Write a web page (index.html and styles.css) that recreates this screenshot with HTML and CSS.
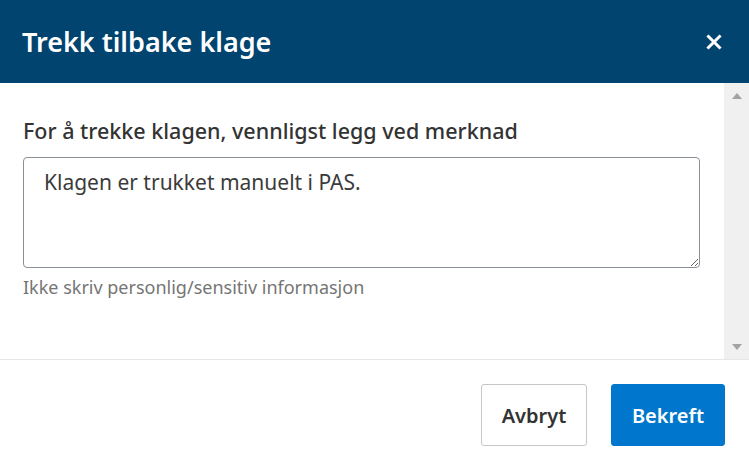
FILE: index.html
```html
<!DOCTYPE html>
<html lang="no">
<head>
<meta charset="utf-8">
<title>Trekk tilbake klage</title>
<link rel="stylesheet" href="styles.css">
</head>
<body>
<div class="modal">
  <div class="header">
    <h1 class="title">Trekk tilbake klage</h1>
    <button class="close" aria-label="Lukk">
      <svg width="16" height="16" viewBox="0 0 16 16"><path d="M2.5 2.5 L13.5 13.5 M13.5 2.5 L2.5 13.5" stroke="#fff" stroke-width="3" stroke-linecap="square"/></svg>
    </button>
  </div>
  <div class="body">
    <div class="content">
      <label class="label" for="merknad">For å trekke klagen, vennligst legg ved merknad</label>
      <textarea id="merknad" class="textarea">Klagen er trukket manuelt i PAS.</textarea>
      <div class="hint">Ikke skriv personlig/sensitiv informasjon</div>
    </div>
    <div class="scrollbar">
      <span class="arrow up"></span>
      <span class="arrow down"></span>
    </div>
  </div>
  <div class="footer">
    <button class="btn btn-secondary">Avbryt</button>
    <button class="btn btn-primary">Bekreft</button>
  </div>
</div>
</body>
</html>
```
FILE: styles.css
```css
html, body {
  margin: 0;
  padding: 0;
  background: #fff;
}
body {
  font-family: "Noto Sans", "Open Sans", sans-serif;
  color: #333;
}
.modal {
  width: 749px;
  height: 469px;
  display: flex;
  flex-direction: column;
}
.header {
  height: 83px;
  flex: none;
  background: #00446f;
  display: flex;
  align-items: center;
  justify-content: space-between;
  padding: 0 27px 0 22px;
  box-sizing: border-box;
}
.title {
  margin: 0;
  color: #fff;
  font-size: 27px;
  font-weight: 600;
  line-height: 36px;
}
.close {
  background: none;
  border: 0;
  padding: 0;
  width: 16px;
  height: 16px;
  display: flex;
  cursor: pointer;
}
.body {
  height: 276px;
  flex: none;
  display: flex;
}
.content {
  flex: 1;
  padding: 34px 24px 0 23px;
  display: flex;
  flex-direction: column;
}
.label {
  font-size: 21.5px;
  font-weight: 500;
  color: #333;
  line-height: 28px;
  margin-bottom: 12px;
}
.textarea {
  width: 677px;
  height: 111px;
  box-sizing: border-box;
  border: 1px solid #8a9098;
  border-radius: 4px;
  padding: 10px 20px;
  font-family: "Noto Sans", "Open Sans", sans-serif;
  font-size: 21px;
  line-height: 28px;
  color: #3b3b3b;
  resize: vertical;
  margin: 0;
  display: block;
}
.hint {
  margin-top: 7px;
  font-size: 18px;
  line-height: 24px;
  color: #757575;
}
.scrollbar {
  width: 25px;
  flex: none;
  background: #f0f0f0;
  display: flex;
  flex-direction: column;
  justify-content: space-between;
  align-items: center;
  padding: 10px 0 9px;
  box-sizing: border-box;
}
.arrow {
  width: 0;
  height: 0;
  border-left: 5px solid transparent;
  border-right: 5px solid transparent;
}
.arrow.up {
  border-bottom: 6px solid #a3a3a3;
}
.arrow.down {
  border-top: 6px solid #a3a3a3;
}
.footer {
  flex: 1;
  border-top: 1px solid #e6e6e6;
  display: flex;
  justify-content: flex-end;
  align-items: flex-start;
  gap: 24px;
  padding: 24px 24px 0 0;
}
.btn {
  height: 62px;
  border-radius: 3px;
  font-family: "Noto Sans", "Open Sans", sans-serif;
  font-size: 20px;
  font-weight: 600;
  padding: 0 10px;
  box-sizing: border-box;
  cursor: pointer;
}
.btn-secondary {
  width: 106px;
  background: #fff;
  border: 1px solid #c6c6c6;
  color: #333;
}
.btn-primary {
  width: 114px;
  background: #0077cc;
  border: 1px solid #0077cc;
  color: #fff;
}
```
